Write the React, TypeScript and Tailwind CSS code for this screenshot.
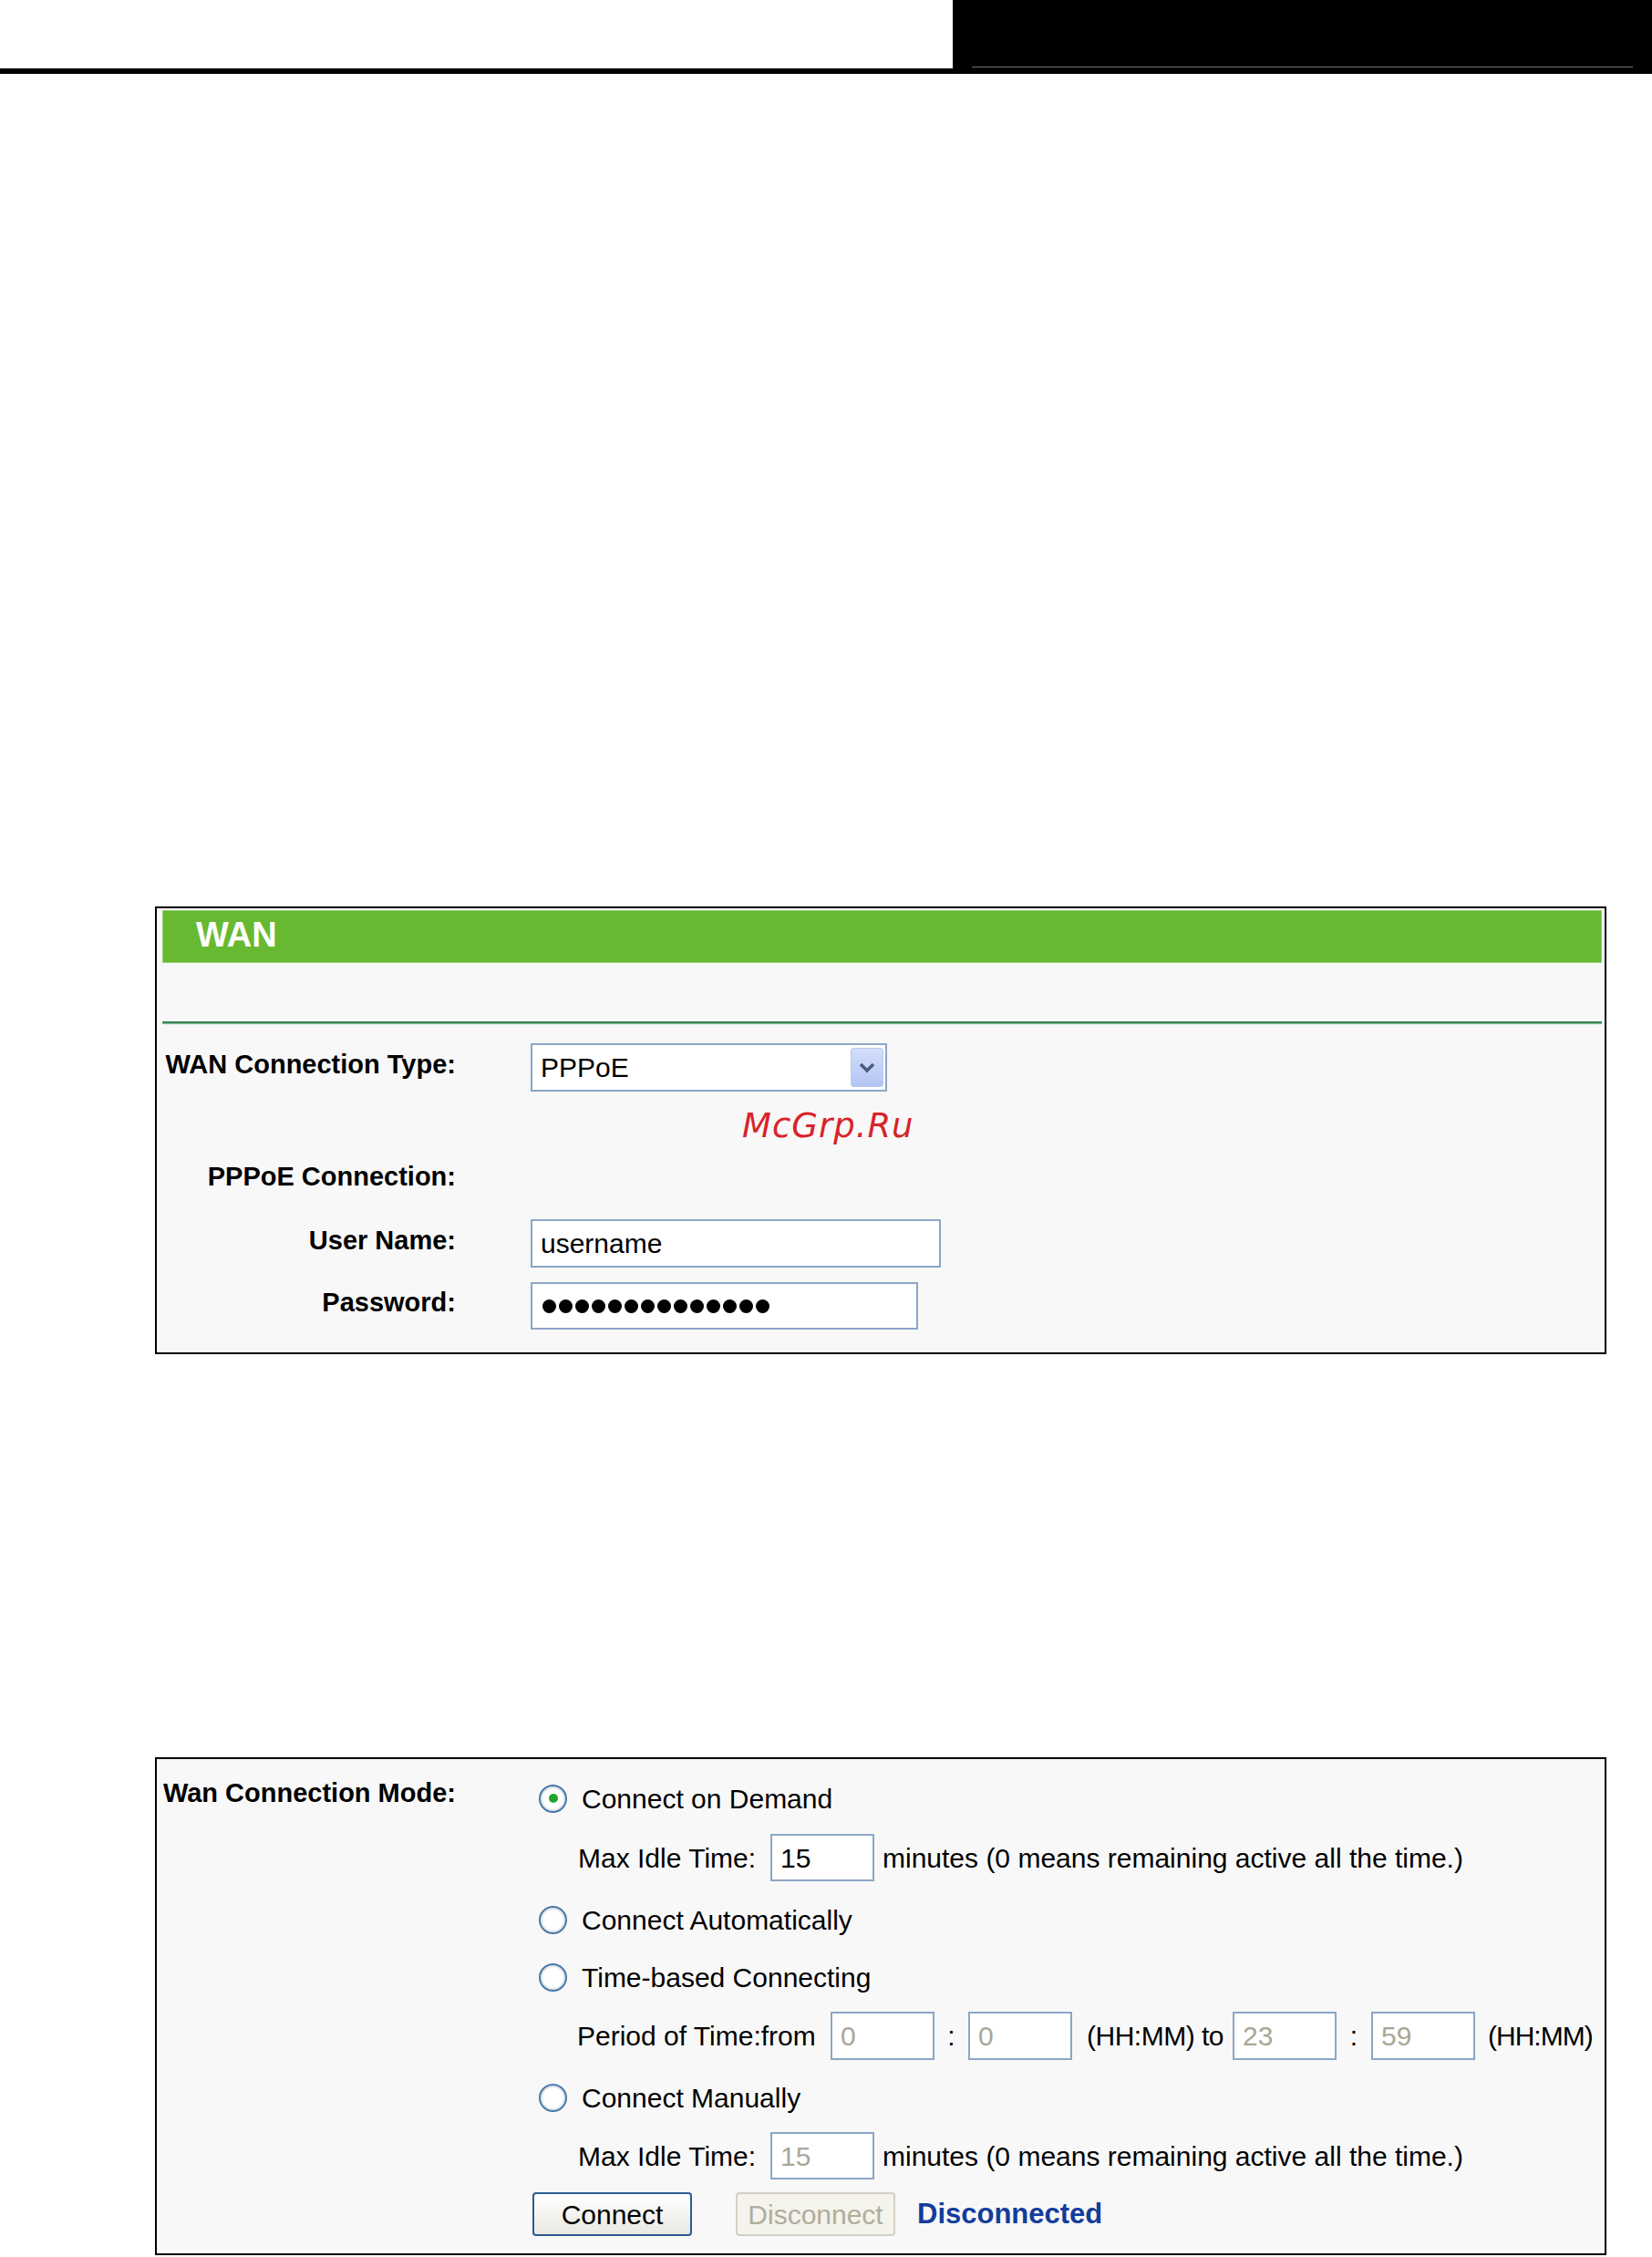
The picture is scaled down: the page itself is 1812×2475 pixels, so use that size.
import React from 'react';

const Radio: React.FC<{ checked?: boolean }> = ({ checked }) => (
  <div className="w-[31px] h-[31px] rounded-full border-2 border-[#4a78a6] bg-white shadow-[inset_0_0_0_2px_#dfe4ea] flex items-center justify-center shrink-0">
    {checked && <div className="w-[10px] h-[10px] rounded-full bg-[#22a52a]"></div>}
  </div>
);

const Field: React.FC<{ width: string; value?: string; disabled?: boolean; height?: string }> = ({ width, value, disabled, height }) => (
  <div
    className={`${width} ${height ?? 'h-[53px]'} border-2 border-[#8ca6c6] bg-white flex items-center pl-[9px] shrink-0 ${
      disabled ? 'text-[#a8a797]' : 'text-black'
    }`}
  >
    {value}
  </div>
);

const Label: React.FC<{ children: React.ReactNode }> = ({ children }) => (
  <div className="w-[322px] text-right font-bold text-[29px] text-black pb-[6px] whitespace-nowrap shrink-0">{children}</div>
);

const App: React.FC = () => {
  return (
    <div className="w-[1812px] min-h-[2475px] bg-white font-['Liberation_Sans',Arial,sans-serif] text-[30px] text-black">
      {/* Page header bar */}
      <div className="h-[75px] flex">
        <div className="flex-1 bg-white"></div>
        <div className="w-[767px] bg-black flex flex-col justify-end px-[21px] pb-[1px]">
          <div className="h-px bg-[#6e6e6e]"></div>
        </div>
      </div>
      <div className="h-[6px] bg-black"></div>

      {/* WAN panel */}
      <div className="relative ml-[170px] mt-[913px] w-[1592px] h-[491px] border-2 border-black bg-[#f8f8f8] pl-[6px] pr-[3px] pt-[2px]">
        <div className="h-[58px] bg-[#68b932] border border-[#96d073] flex items-center pl-[36px] pb-[5px]">
          <span className="text-white font-bold text-[38px] leading-none">WAN</span>
        </div>
        <div className="h-[64px]"></div>
        <div className="h-[3px] bg-[#3b8757] border-b border-[#7fb894]"></div>
        <div className="h-px bg-[#e4f0e8]"></div>

        <div className="h-[20px]"></div>
        <div className="flex items-center h-[53px]">
          <Label>WAN Connection Type:</Label>
          <div className="ml-[82px] w-[391px] h-[53px] border-2 border-[#8ca6c6] bg-white flex items-center justify-between pl-[9px] pr-[2px]">
            <span>PPPoE</span>
            <div className="w-[36px] h-[43px] rounded-[3px] bg-gradient-to-b from-[#d3defb] to-[#b3c5f3] border border-[#b9c9ef] flex items-center justify-center">
              <svg width="20" height="14" viewBox="0 0 20 14">
                <polyline points="3,3 10,10 17,3" fill="none" stroke="#4b5b7e" strokeWidth="3.5" />
              </svg>
            </div>
          </div>
        </div>

        <div className="h-[70px]"></div>
        <div className="flex items-center h-[54px]">
          <Label>PPPoE Connection:</Label>
        </div>

        <div className="h-[16px]"></div>
        <div className="flex items-center h-[53px]">
          <Label>User Name:</Label>
          <div className="ml-[82px]">
            <Field width="w-[450px]" value="username" />
          </div>
        </div>

        <div className="h-[16px]"></div>
        <div className="flex items-center h-[52px]">
          <Label>Password:</Label>
          <div className="ml-[82px] w-[425px] h-[52px] border-2 border-[#8ca6c6] bg-white flex items-center gap-[3px] pl-[11px]">
            {Array.from({ length: 14 }).map((_, i) => (
              <div key={i} className="w-[15px] h-[15px] rounded-full bg-black"></div>
            ))}
          </div>
        </div>

        {/* watermark */}
        <div className="absolute left-[642px] top-[220px] text-[37px] leading-none italic tracking-[1px] text-[#d8232a] font-['DejaVu_Sans',sans-serif]">
          McGrp.Ru
        </div>
      </div>

      {/* Connection mode panel */}
      <div className="ml-[170px] mt-[442px] w-[1592px] h-[546px] border-2 border-black bg-[#f8f8f8] flex pt-[11px]">
        <div className="w-[328px] shrink-0">
          <div className="h-[64px] flex items-center justify-end pb-[10px] font-bold text-[29px] whitespace-nowrap">
            Wan Connection Mode:
          </div>
        </div>
        <div className="ml-[82px] flex flex-col whitespace-nowrap">
          <div className="h-[64px] flex items-center">
            <div className="ml-[9px]"><Radio checked /></div>
            <span className="ml-[16px]">Connect on Demand</span>
          </div>
          <div className="h-[66px] flex items-center">
            <span className="ml-[52px] w-[211px]">Max Idle Time:</span>
            <Field width="w-[114px]" value="15" height="h-[52px]" />
            <span className="ml-[9px]">minutes (0 means remaining active all the time.)</span>
          </div>
          <div className="h-[70px] flex items-center">
            <div className="ml-[9px]"><Radio /></div>
            <span className="ml-[16px]">Connect Automatically</span>
          </div>
          <div className="h-[56px] flex items-center">
            <div className="ml-[9px]"><Radio /></div>
            <span className="ml-[16px]">Time-based Connecting</span>
          </div>
          <div className="h-[72px] flex items-center">
            <span className="ml-[51px] w-[278px]">Period of Time:from</span>
            <Field width="w-[114px]" value="0" disabled />
            <span className="w-[37px] text-center">:</span>
            <Field width="w-[114px]" value="0" disabled />
            <span className="ml-[16px] w-[160px] tracking-[-0.5px]">(HH:MM) to</span>
            <Field width="w-[114px]" value="23" disabled />
            <span className="w-[38px] text-center">:</span>
            <Field width="w-[114px]" value="59" disabled />
            <span className="ml-[14px] tracking-[-1px]">(HH:MM)</span>
          </div>
          <div className="h-[64px] flex items-center">
            <div className="ml-[9px]"><Radio /></div>
            <span className="ml-[16px]">Connect Manually</span>
          </div>
          <div className="h-[64px] flex items-center">
            <span className="ml-[52px] w-[211px]">Max Idle Time:</span>
            <Field width="w-[114px]" value="15" disabled height="h-[52px]" />
            <span className="ml-[9px]">minutes (0 means remaining active all the time.)</span>
          </div>
          <div className="h-[64px] flex items-center">
            <button className="ml-[2px] w-[175px] h-[48px] rounded-[4px] border-2 border-[#2b5b92] bg-gradient-to-b from-white to-[#e9e8e1] text-black text-[30px] flex items-center justify-center">
              Connect
            </button>
            <button
              disabled
              className="ml-[48px] w-[175px] h-[48px] rounded-[4px] border-2 border-[#d2d0c3] bg-[#f4f3ec] text-[#b0ad9c] text-[30px] flex items-center justify-center"
            >
              Disconnect
            </button>
            <span className="ml-[24px] font-bold text-[31px] text-[#133c9c]">Disconnected</span>
          </div>
        </div>
      </div>
      <div className="h-[2px]"></div>
    </div>
  );
};

export default App;
